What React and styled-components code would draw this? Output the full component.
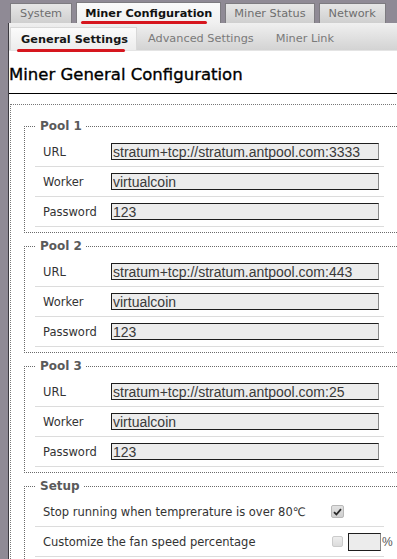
import React from "react";
import styled, { createGlobalStyle } from "styled-components";

const Global = createGlobalStyle`
  html, body { margin: 0; padding: 0; }
  body {
    background: #8f8a95;
    overflow: hidden;
    font-family: "DejaVu Sans", Verdana, sans-serif;
  }
`;

const Page = styled.div`
  width: 397px;
  height: 559px;
  overflow: hidden;
  background: #8f8a95;
`;

const TopTabs = styled.div`
  display: flex;
  align-items: flex-end;
  gap: 4px;
  padding: 3px 0 0 10px;
  height: 20px;
`;

const Tab = styled.div`
  position: relative;
  height: ${(p) => (p.$active ? 21 : 20)}px;
  box-sizing: border-box;
  padding: 0 ${(p) => p.$pad}px;
  display: flex;
  align-items: center;
  font-size: 11.3px;
  font-weight: ${(p) => (p.$active ? "bold" : "normal")};
  color: ${(p) => (p.$active ? "#111" : "#6e6e6e")};
  background: ${(p) =>
    p.$active
      ? "linear-gradient(#fafafa, #f0f0f0)"
      : "linear-gradient(#e6e6e6, #cfcfcf)"};
  border: 1px solid #7d7b80;
  border-bottom: none;
  white-space: nowrap;
  &::after {
    content: "";
    display: ${(p) => (p.$active ? "block" : "none")};
    position: absolute;
    left: 4px;
    right: 13px;
    bottom: -1px;
    height: 3px;
    border-radius: 2px;
    background: #d6161e;
  }
`;

const Panel = styled.div`
  margin-left: 8px;
  background: #fff;
  border-left: 1px solid #3c3a40;
  height: 540px;
  overflow: hidden;
`;

const SubTabs = styled.div`
  display: flex;
  align-items: flex-end;
  height: 27px;
  padding-left: 1px;
  background: linear-gradient(#f0f0f0, #d3d3d3);
  border-bottom: 1px solid #e4e4e4;
`;

const SubTab = styled.div`
  position: relative;
  height: 23px;
  box-sizing: border-box;
  padding: 0 ${(p) => (p.$active ? 8 : 11)}px 0 ${(p) => (p.$active ? 10 : 11)}px;
  display: flex;
  align-items: center;
  font-size: 11.3px;
  font-weight: ${(p) => (p.$active ? "bold" : "normal")};
  color: ${(p) => (p.$active ? "#161616" : "#7a7a7a")};
  background: ${(p) =>
    p.$active ? "linear-gradient(#fbfbfb, #ececec)" : "transparent"};
  border: ${(p) => (p.$active ? "1px solid #d8d8d8" : "none")};
  border-bottom: none;
  white-space: nowrap;
  &::after {
    content: "";
    display: ${(p) => (p.$active ? "block" : "none")};
    position: absolute;
    left: 6px;
    right: 11px;
    bottom: -2px;
    height: 3px;
    border-radius: 2px;
    background: #d6161e;
  }
`;

const Heading = styled.h1`
  margin: 0;
  padding: 14px 0 8px 0;
  font-size: 16.5px;
  line-height: 20px;
  font-weight: normal;
  -webkit-text-stroke: 0.35px #000;
  color: #000;
  border-bottom: 1px solid #000;
`;

const Outer = styled.div`
  margin: 10px 0 0 1px;
  width: 420px;
  box-sizing: border-box;
  border-top: 1px dotted #777;
  border-left: 1px dotted #777;
  padding: 13px 0 0 13px;
`;

const Fieldset = styled.fieldset`
  width: 375px;
  margin: 0 0 5px 0;
  padding: 3px 0 5px 10px;
  border: 1px dotted #6a6a6a;
  min-width: 0;
  box-sizing: border-box;
`;

const Legend = styled.legend`
  padding: 0 4px;
  margin-left: 1px;
  font-size: 12px;
  line-height: 16px;
  font-weight: bold;
  color: #5a5a5a;
`;

const Row = styled.div`
  width: 349px;
  box-sizing: border-box;
  height: 30px;
  padding-left: 8px;
  display: grid;
  grid-template-columns: ${(p) => p.$cols};
  align-items: center;
  border-bottom: 1px solid #dcdcdc;
`;

const Label = styled.span`
  font-size: 11.5px;
  color: #333;
  white-space: nowrap;
`;

const Field = styled.input`
  width: ${(p) => p.$w}px;
  height: ${(p) => p.$h}px;
  box-sizing: border-box;
  margin: 0;
  padding: 0 0 0 1px;
  border: 1px solid #1e1e1e;
  border-right-color: #8a8a8a;
  background: #ececec;
  font-family: "Liberation Sans", Arial, sans-serif;
  font-size: 14px;
  color: #3a3a3a;
  outline: none;
`;

const Controls = styled.div`
  display: flex;
  align-items: center;
`;

const Box = styled.span`
  width: ${(p) => p.$size}px;
  height: ${(p) => p.$size}px;
  box-sizing: border-box;
  margin-left: ${(p) => p.$ml}px;
  margin-right: ${(p) => p.$mr}px;
  border: 1px solid ${(p) => (p.$checked ? "#b8b8b8" : "#cbcbcb")};
  border-radius: 2px;
  background: ${(p) =>
    p.$checked ? "linear-gradient(#e2e2e2, #cfcfcf)" : "linear-gradient(#eeeeee, #dcdcdc)"};
  display: flex;
  align-items: center;
  justify-content: center;
`;

const Percent = styled.span`
  font-family: "Liberation Sans", Arial, sans-serif;
  font-size: 12px;
  color: #555;
  margin-left: 1px;
`;

const pools = [
  { name: "Pool 1", url: "stratum+tcp://stratum.antpool.com:3333" },
  { name: "Pool 2", url: "stratum+tcp://stratum.antpool.com:443" },
  { name: "Pool 3", url: "stratum+tcp://stratum.antpool.com:25" },
];

function Check({ checked, size, ml, mr }) {
  return (
    <Box $checked={checked} $size={size} $ml={ml} $mr={mr}>
      {checked && (
        <svg width="9" height="8" viewBox="0 0 9 8">
          <path d="M1 4.2 L3.4 6.5 L8 1.2" fill="none" stroke="#2a2a2a" strokeWidth="1.8" />
        </svg>
      )}
    </Box>
  );
}

export default function App() {
  return (
    <Page>
      <Global />
      <TopTabs>
        <Tab $pad={9}>System</Tab>
        <Tab $pad={8} $active>Miner Configuration</Tab>
        <Tab $pad={8}>Miner Status</Tab>
        <Tab $pad={9}>Network</Tab>
      </TopTabs>
      <Panel>
        <SubTabs>
          <SubTab $active>General Settings</SubTab>
          <SubTab>Advanced Settings</SubTab>
          <SubTab>Miner Link</SubTab>
        </SubTabs>
        <Heading>Miner General Configuration</Heading>
        <Outer>
          {pools.map((p) => (
            <Fieldset key={p.name}>
              <Legend>{p.name}</Legend>
              <Row $cols="68px 268px">
                <Label>URL</Label>
                <Field $w={268} $h={17} readOnly value={p.url} />
              </Row>
              <Row $cols="68px 268px">
                <Label>Worker</Label>
                <Field $w={268} $h={17} readOnly value="virtualcoin" />
              </Row>
              <Row $cols="68px 268px">
                <Label>Password</Label>
                <Field $w={268} $h={17} readOnly value="123" />
              </Row>
            </Fieldset>
          ))}
          <Fieldset>
            <Legend>Setup</Legend>
            <Row $cols="288px auto">
              <Label>Stop running when temprerature is over 80℃</Label>
              <Controls>
                <Check checked size={13} ml={0} mr={0} />
              </Controls>
            </Row>
            <Row $cols="288px auto">
              <Label>Customize the fan speed percentage</Label>
              <Controls>
                <Check size={11} ml={1} mr={5} />
                <Field $w={33} $h={18} readOnly value="" />
                <Percent>%</Percent>
              </Controls>
            </Row>
          </Fieldset>
        </Outer>
      </Panel>
    </Page>
  );
}
